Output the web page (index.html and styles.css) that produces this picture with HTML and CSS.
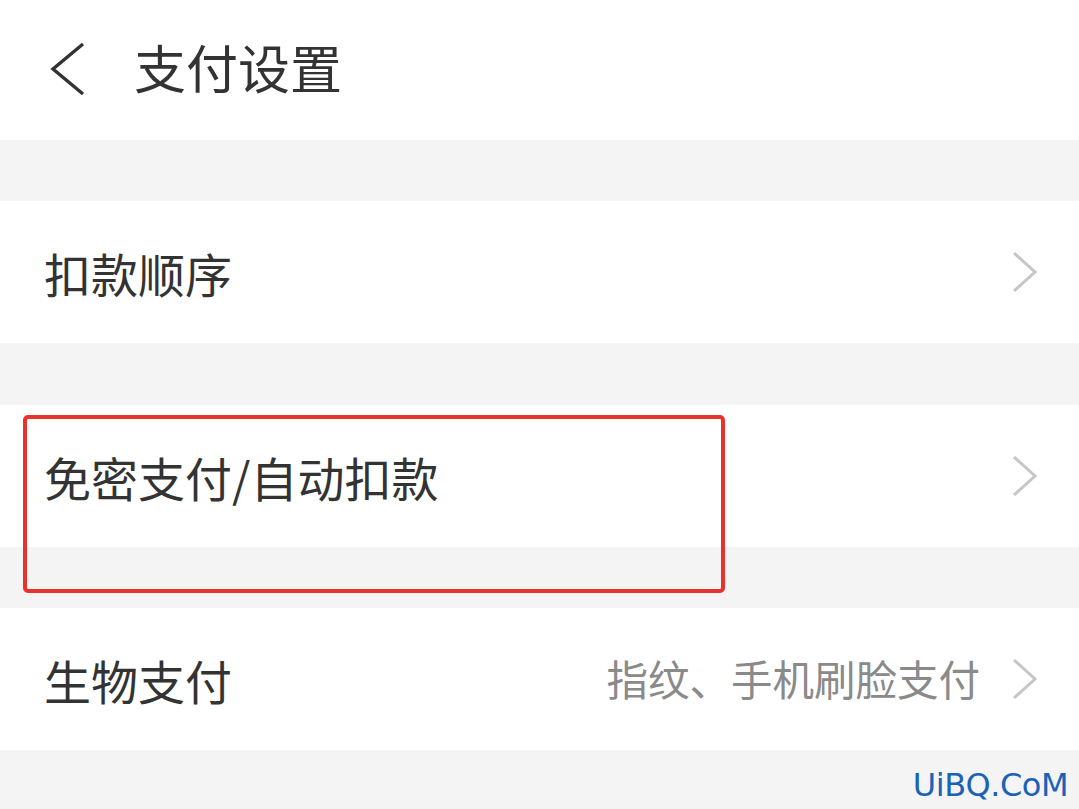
FILE: index.html
```html
<!DOCTYPE html>
<html lang="zh-CN">
  <head>
    <meta charset="UTF-8" />
    <meta name="viewport" content="width=device-width, initial-scale=1.0" />
    <title>支付设置</title>
    <link rel="stylesheet" href="styles.css">
  </head>
  <body>
    <header class="topbar">
      <svg class="back" width="40" height="56" viewBox="0 0 40 56">
        <polyline points="33,3 3,28 33,53" fill="none" stroke="#333" stroke-width="3.4" />
      </svg>
      <h1 class="title">支付设置</h1>
    </header>

    <main class="list">
      <div class="row">
        <span class="label">扣款顺序</span>
        <svg class="arrow" width="28" height="44" viewBox="0 0 28 44">
          <polyline points="3,3 24,22 3,41" fill="none" stroke="#c6c6c6" stroke-width="3" />
        </svg>
      </div>

      <div class="row row-marked">
        <span class="label">免密支付/自动扣款</span>
        <svg class="arrow" width="28" height="44" viewBox="0 0 28 44">
          <polyline points="3,3 24,22 3,41" fill="none" stroke="#c6c6c6" stroke-width="3" />
        </svg>
        <div class="mark"></div>
      </div>

      <div class="row">
        <span class="label">生物支付</span>
        <span class="value">指纹、手机刷脸支付</span>
        <svg class="arrow" width="28" height="44" viewBox="0 0 28 44">
          <polyline points="3,3 24,22 3,41" fill="none" stroke="#c6c6c6" stroke-width="3" />
        </svg>
      </div>
    </main>

    <footer class="foot">
      <span class="watermark">UiBQ.CoM</span>
    </footer>
  </body>
</html>
```

FILE: styles.css
```css
body { margin: 0; background: #f4f4f4; color: #333; font-family: "Noto Sans CJK SC", "Noto Sans", sans-serif; width: 1079px; height: 809px; overflow: hidden; }

.topbar { background: #fff; height: 140px; display: flex; align-items: center; padding-left: 50px; box-sizing: border-box; }
.topbar .back { display: block; margin-right: 44px; margin-top: -2px; }
.title { margin: 0 0 6px; font-size: 52px; font-weight: 400; line-height: 1; color: #333; }

.list { padding-top: 61px; display: flex; flex-direction: column; gap: 62px; }
.row { background: #fff; height: 142px; display: flex; align-items: center; padding: 0 40px 0 44px; }
.row + .row + .row { margin-top: -1px; }
.label { font-size: 47px; line-height: 1; flex: 1; color: #333; }
.value { font-size: 41.5px; line-height: 1; color: #8a8a8a; margin-right: 31px; }
.arrow { display: block; flex: none; }

.row-marked { position: relative; }
.mark { position: absolute; left: 23px; top: 10px; width: 702px; height: 178px; border: 4px solid #e8322b; border-radius: 5px; box-sizing: border-box; }

.foot { height: 59px; display: flex; justify-content: flex-end; align-items: center; padding-right: 11px; }
.watermark { font-family: "DejaVu Sans", sans-serif; font-size: 32px; color: #1a62b8; letter-spacing: -0.5px; margin-top: 11px; }
```
